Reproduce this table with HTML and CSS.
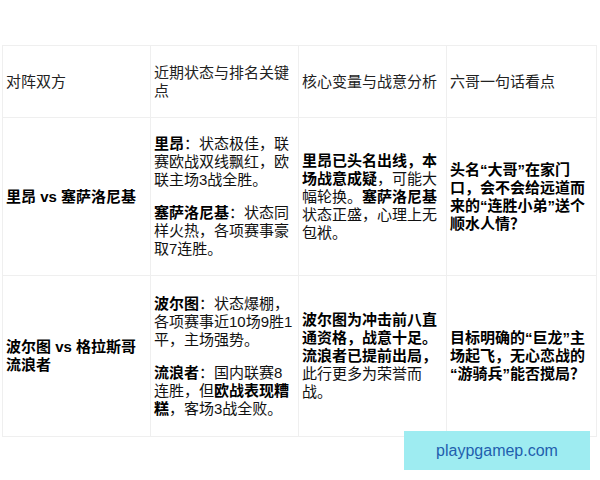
FILE: index.html
```html
<!DOCTYPE html>
<html lang="zh-CN">
<head>
<meta charset="utf-8">
<title>对阵分析</title>
<link rel="stylesheet" href="styles.css">
</head>
<body>
<div class="page">
  <table class="matches">
    <colgroup>
      <col class="c1"><col class="c2"><col class="c3"><col class="c4">
    </colgroup>
    <tr class="head">
      <td><p>对阵双方</p></td>
      <td><p>近期状态与排名关键点</p></td>
      <td><p>核心变量与战意分析</p></td>
      <td><p>六哥一句话看点</p></td>
    </tr>
    <tr class="row1">
      <td><b>里昂 vs 塞萨洛尼基</b></td>
      <td>
        <p><b>里昂</b>：状态极佳，联赛欧战双线飘红，欧联主场3战全胜。</p>
        <p><b>塞萨洛尼基</b>：状态同样火热，各项赛事豪取7连胜。</p>
      </td>
      <td><b>里昂已头名出线，本场战意成疑</b>，可能大幅轮换。<b>塞萨洛尼基</b>状态正盛，心理上无包袱。</td>
      <td><b>头名“大哥”在家门口，会不会给远道而来的“连胜小弟”送个顺水人情？</b></td>
    </tr>
    <tr class="row2">
      <td><b>波尔图 vs 格拉斯哥流浪者</b></td>
      <td>
        <p><b>波尔图</b>：状态爆棚，各项赛事近10场9胜1平，主场强势。</p>
        <p><b>流浪者</b>：国内联赛8连胜，但<b>欧战表现糟糕</b>，客场3战全败。</p>
      </td>
      <td><b>波尔图为冲击前八直通资格，战意十足。流浪者已提前出局，</b>此行更多为荣誉而战。</td>
      <td><b>目标明确的“巨龙”主场起飞，无心恋战的“游骑兵”能否搅局？</b></td>
    </tr>
  </table>
  <div class="mark">playpgamep.com</div>
</div>
</body>
</html>
```
FILE: styles.css
```css
html, body {
  margin: 0;
  padding: 0;
  background: #ffffff;
}
body {
  font-family: "Liberation Sans", "Noto Sans CJK SC", sans-serif;
  font-size: 15px;
  line-height: 18px;
  color: #111111;
}
.page {
  position: relative;
  width: 600px;
  height: 480px;
  padding: 45px 0 0 2px;
  box-sizing: border-box;
}
.matches {
  width: 594px;
  table-layout: fixed;
  border-collapse: collapse;
}
.c1, .c2, .c3 { width: 148px; }
.c4 { width: 150px; }
.matches td {
  border: 1px solid #efefef;
  padding: 2px 3px;
  vertical-align: middle;
  word-break: break-all;
}
.matches p {
  margin: 15px 0;
}
.head { height: 72px; }
.head td { color: #222222; }
.row1 { height: 157px; }
.row2 { height: 161px; }
b { font-weight: 700; color: #000000; }
.mark {
  position: absolute;
  left: 404px;
  top: 431px;
  width: 186px;
  height: 39px;
  background: #9eecf1;
  color: #1f5fae;
  font-size: 16px;
  display: flex;
  align-items: center;
  justify-content: center;
}
```
